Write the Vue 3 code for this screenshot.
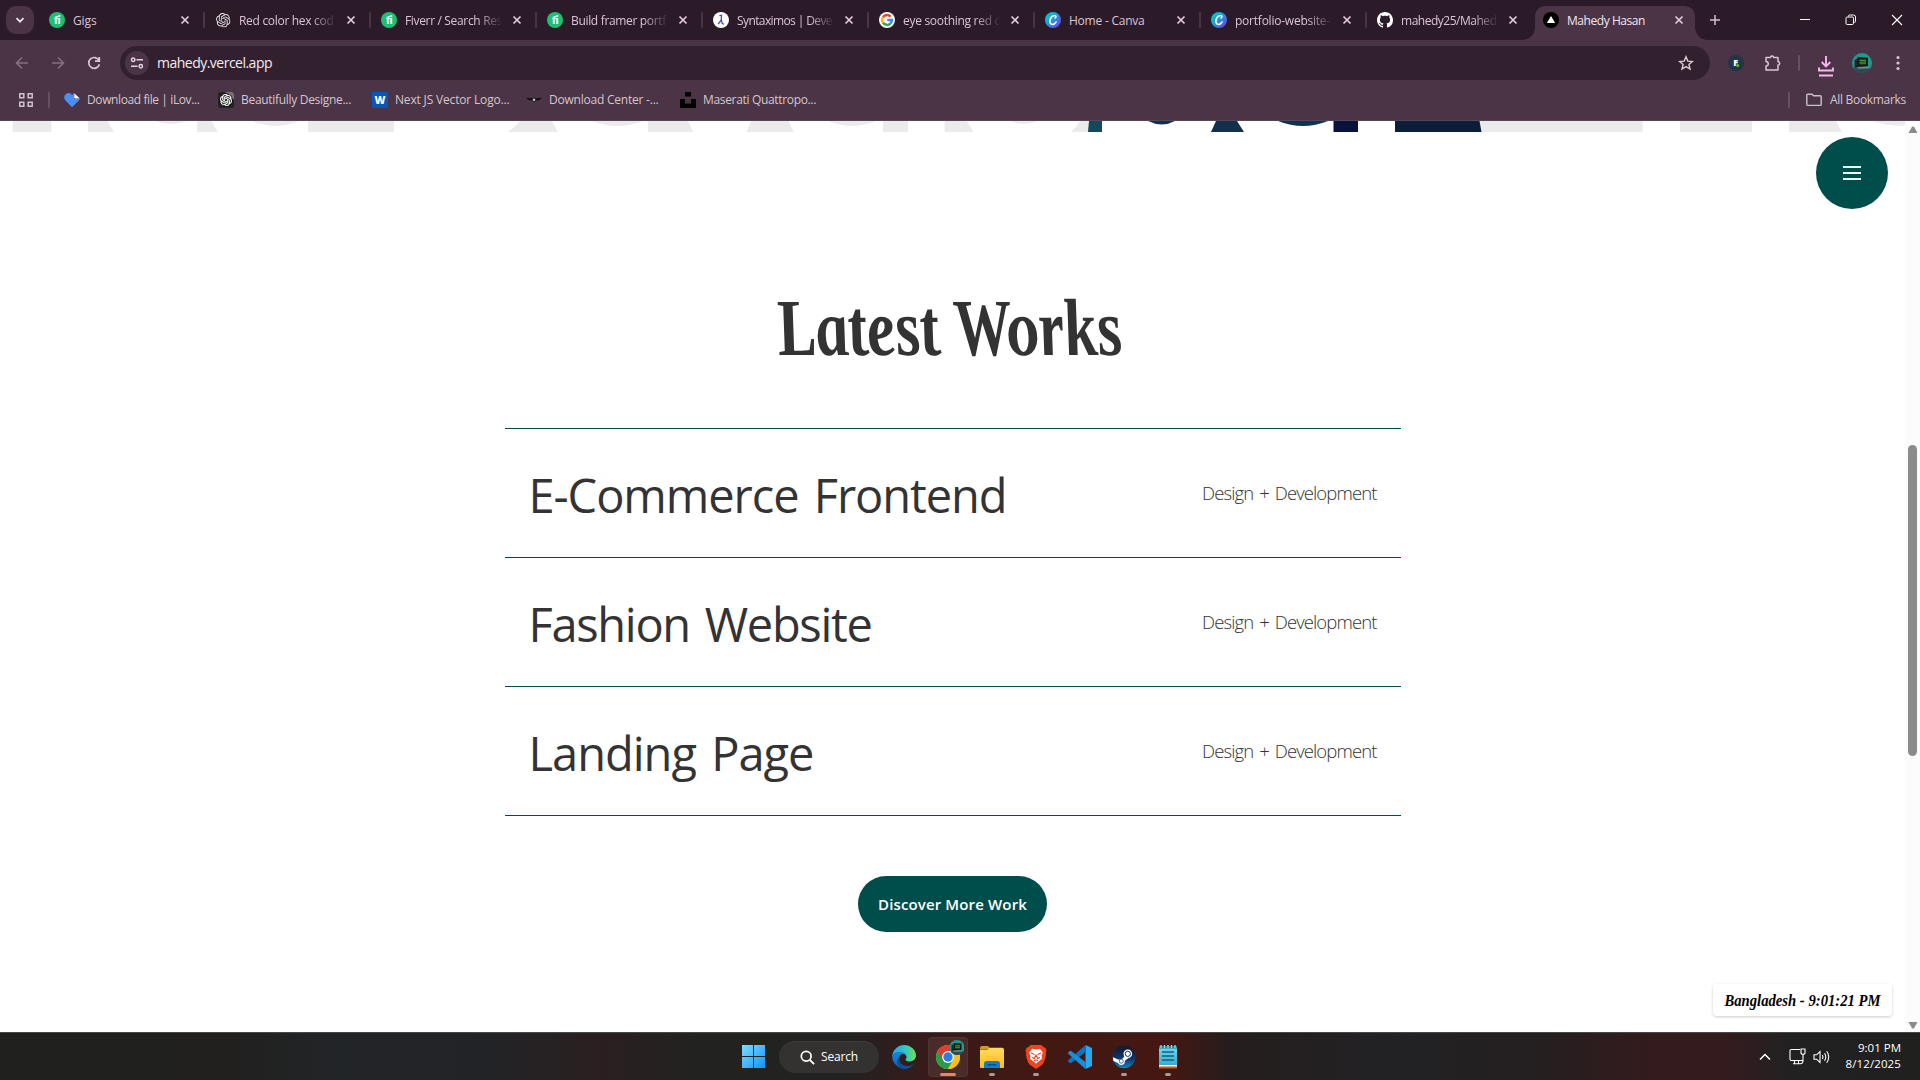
<script setup>
const tabs = [
  { badge: 'fi', title: 'Gigs', w: 23.5 },
  { icon: 'gpt', title: 'Red color hex cod', w: 94.5, fade: true },
  { badge: 'fi', title: 'Fiverr / Search Res', w: 97, fade: true },
  { badge: 'fi', title: 'Build framer portf', w: 95, fade: true },
  { icon: 'syntax', title: 'Syntaximos | Deve', w: 95, fade: true },
  { icon: 'google', title: 'eye soothing red c', w: 97, fade: true },
  { icon: 'canva', title: 'Home - Canva', w: 75.5 },
  { icon: 'canva', title: 'portfolio-website-', w: 95, fade: true },
  { icon: 'github', title: 'mahedy25/Mahed', w: 95.5, fade: true },
  { icon: 'vercel', title: 'Mahedy Hasan', w: 78, active: true },
]
const bookmarks = [
  { icon: 'heart', title: 'Download file | iLov...', w: 112.5 },
  { icon: 'gptbox', title: 'Beautifully Designe...', w: 110 },
  { badge: 'W', title: 'Next JS Vector Logo...', w: 114.5 },
  { icon: 'wings', title: 'Download Center -...', w: 109.5 },
  { icon: 'unsplash', title: 'Maserati Quattropo...', w: 113 },
]
const works = [
  { title: 'E-Commerce Frontend', w: 478 },
  { title: 'Fashion Website', w: 343 },
  { title: 'Landing Page', w: 285 },
]
const apps = [
  { icon: 'edge' },
  { icon: 'chrome', current: true },
  { icon: 'explorer', open: true },
  { icon: 'brave', open: true },
  { icon: 'vscode' },
  { icon: 'steam', open: true },
  { icon: 'notepad', open: true },
]
// Tracks a label so that it fills the given width.
const vFit = {
  mounted(el, { value }) {
    const range = document.createRange()
    range.selectNodeContents(el)
    const width = range.getBoundingClientRect().width
    el.style.letterSpacing = `${(value - width) / el.textContent.length}px`
  },
}
</script>

<template>
  <svg class="sheet" width="0" height="0">
    <defs>
      <linearGradient id="g-canva" x1="0" y1="0" x2="1" y2="1"><stop offset=".2" stop-color="#00c4cc" /><stop offset=".6" stop-color="#3b7fe0" /><stop offset="1" stop-color="#7d2ae8" /></linearGradient>
      <linearGradient id="g-win" x1="0" y1="0" x2="1" y2="1"><stop offset="0" stop-color="#7fdcff" /><stop offset="1" stop-color="#1094f5" /></linearGradient>
      <linearGradient id="g-edge" x1="0" y1="0" x2="1" y2="0"><stop offset="0" stop-color="#2aa5e8" /><stop offset=".55" stop-color="#33c6c4" /><stop offset="1" stop-color="#6ee04c" /></linearGradient>
      <linearGradient id="g-edge2" x1="0" y1="0" x2="0" y2="1"><stop offset="0" stop-color="#1686d8" /><stop offset="1" stop-color="#1164b4" /></linearGradient>
      <linearGradient id="g-steam" x1="0" y1="0" x2="0" y2="1"><stop offset="0" stop-color="#10162f" /><stop offset=".6" stop-color="#0e3a70" /><stop offset="1" stop-color="#1688bd" /></linearGradient>
      <linearGradient id="g-folder" x1="0" y1="0" x2="0" y2="1"><stop offset="0" stop-color="#ffda60" /><stop offset="1" stop-color="#fbbd24" /></linearGradient>
      <linearGradient id="g-note" x1="0" y1="0" x2="0" y2="1"><stop offset="0" stop-color="#74dbee" /><stop offset="1" stop-color="#35aed0" /></linearGradient>
    </defs>
    <symbol id="knot" viewBox="0 0 24 24"><path fill="currentColor" d="M22.28 9.82a5.98 5.98 0 0 0-.52-4.91 6.05 6.05 0 0 0-6.51-2.9A6.07 6.07 0 0 0 4.98 4.18a5.98 5.98 0 0 0-4 2.9 6.05 6.05 0 0 0 .74 7.1 5.98 5.98 0 0 0 .51 4.91 6.05 6.05 0 0 0 6.52 2.9A5.98 5.98 0 0 0 13.26 24a6.06 6.06 0 0 0 5.77-4.21 5.99 5.99 0 0 0 4-2.9 6.06 6.06 0 0 0-.75-7.07zm-9.02 12.61a4.48 4.48 0 0 1-2.88-1.04l.14-.08 4.78-2.76a.8.8 0 0 0 .39-.68v-6.74l2.02 1.17.04.05v5.58a4.5 4.5 0 0 1-4.49 4.5zM3.6 18.3a4.47 4.47 0 0 1-.54-3.01l.15.08 4.78 2.76a.77.77 0 0 0 .78 0l5.84-3.37v2.33l-.03.06-4.83 2.79A4.5 4.5 0 0 1 3.6 18.3zM2.34 7.9a4.49 4.49 0 0 1 2.37-1.98V11.6a.77.77 0 0 0 .38.68l5.82 3.35-2.02 1.17h-.07l-4.83-2.79A4.5 4.5 0 0 1 2.34 7.87zm16.6 3.85-5.84-3.38L15.12 7.2h.07l4.83 2.79a4.49 4.49 0 0 1-.68 8.1v-5.67a.79.79 0 0 0-.41-.67zm2.01-3.02-.14-.09-4.78-2.78a.78.78 0 0 0-.78 0L9.41 9.23V6.9l.03-.06 4.83-2.79a4.5 4.5 0 0 1 6.68 4.66zM8.31 12.86l-2.02-1.16-.04-.06V6.07a4.5 4.5 0 0 1 7.38-3.45l-.14.08-4.78 2.76a.8.8 0 0 0-.39.68zm1.09-2.36L12 9l2.61 1.5v3L12 15l-2.6-1.5z" /></symbol>
    <symbol id="gpt" viewBox="0 0 16 16"><use href="#knot" x="1" y="1" width="14.5" height="14.5" color="#e4dfe4" /></symbol>
    <symbol id="gptbox" viewBox="0 0 16 16"><rect width="16" height="16" rx="2.500" fill="#242424" /><path d="M2.500 0h11A2.500 2.500 0 0 1 16 2.500V8L7 0z" fill="#77736f" /><circle cx="8" cy="8" r="6.800" fill="#111" /><use href="#knot" x="2" y="2" width="12" height="12" color="#fff" stroke="#fff" stroke-width=".8" /></symbol>
    <symbol id="syntax" viewBox="0 0 16 16"><circle cx="8" cy="8" r="8" fill="#fff" /><path d="M6.400 3.600 8.500 3.200l-.3 4.900-3 3.900M8.300 8l.8 3.200 1.700 1.200" fill="none" stroke="#3f4fb3" stroke-width="1.300" /></symbol>
    <symbol id="google" viewBox="0 0 16 16"><circle cx="8" cy="8" r="8" fill="#fff" /><g fill="none" stroke-width="2.500"><path d="M4 5.200A4.900 4.900 0 0 1 11.600 4.600" stroke="#ea4335" /><path d="M4 5.200a4.900 4.900 0 0 0 0 5.600" stroke="#fbbc05" /><path d="M4 10.800a4.900 4.900 0 0 0 7.300.8" stroke="#34a853" /><path d="M11.300 11.600A4.900 4.900 0 0 0 12.900 8H8.200" stroke="#4285f4" /></g></symbol>
    <symbol id="canva" viewBox="0 0 16 16"><circle cx="8" cy="8" r="8" fill="url(#g-canva)" /><path d="M10.100 6.100c1.200-.7 1.300-2.700-.5-2.700C7 3.400 4.900 6.400 4.900 9.200c0 4 4 4.200 6.200.8" fill="none" stroke="#fff" stroke-width="1.500" stroke-linecap="round" /></symbol>
    <symbol id="github" viewBox="0 0 16 16"><path fill="#fff" d="M8 0C3.580 0 0 3.580 0 8c0 3.540 2.290 6.530 5.470 7.590.4.070.55-.17.55-.38 0-.19-.01-.82-.01-1.490-2.010.37-2.530-.49-2.690-.94-.09-.23-.48-.94-.82-1.130-.28-.15-.68-.52-.01-.53.63-.01 1.080.58 1.230.82.72 1.210 1.870.87 2.330.66.07-.52.28-.87.51-1.070-1.780-.2-3.640-.89-3.640-3.950 0-.87.31-1.590.82-2.150-.08-.2-.36-1.020.08-2.120 0 0 .67-.21 2.200.82.64-.18 1.320-.27 2-.27s1.360.09 2 .27c1.530-1.040 2.200-.82 2.200-.82.44 1.100.16 1.920.08 2.120.51.56.82 1.270.82 2.150 0 3.070-1.870 3.750-3.650 3.950.29.25.54.73.54 1.480 0 1.070-.01 1.930-.01 2.200 0 .21.15.46.55.38A8.010 8.010 0 0 0 16 8c0-4.420-3.580-8-8-8z" /></symbol>
    <symbol id="vercel" viewBox="0 0 16 16"><circle cx="8" cy="8" r="8" fill="#000" /><path d="M8 4l4.200 7H3.800z" fill="#fff" /></symbol>
    <symbol id="heart" viewBox="0 0 16 16"><path d="M8 15.200 1.300 8.300C-.6 6.200.2 2.900 2.400 1.700 4.600.5 7 1 8 3.200l2-2.400V7h5.800c-.2.600-.6 1.100-1 1.500z" fill="#4a8ff8" /><path d="M10.300 1.200 15.800 6.600h-5.500z" fill="#fff" /></symbol>
    <symbol id="wings" viewBox="0 0 16 16"><path d="M0 5.800l6 .5 2-.9 2 .9 6-.5-2.500 2.300-4 .7L8 10l-1.500-1.200-4-.7z" fill="#141014" /><circle cx="8" cy="7.700" r="1.300" fill="#ccc" /></symbol>
    <symbol id="unsplash" viewBox="0 0 16 16"><path d="M5 0h6v4.500H5zM0 7h5v4.500h6V7h5v9H0z" fill="#000" /></symbol>
    <symbol id="close" viewBox="0 0 16 16"><path d="M4.500 4.500l7 7M11.500 4.500l-7 7" stroke="currentColor" stroke-width="1.700" /></symbol>
    <symbol id="avatar" viewBox="0 0 20 20"><circle cx="10" cy="10" r="10" fill="#1f9a8f" /><path d="M1.500 15.200h17A10 10 0 0 1 1.500 15.200z" fill="#2c4a52" /><path d="M5.500 4l10.500.8v9L4.500 14.500z" fill="#16191c" /><path d="M2.500 7l3-1.500v9L2.500 15z" fill="#22262a" /><rect x="7.500" y="6.300" width="6.500" height="5.200" fill="#1c5c14" /><path d="M7.500 7.500H14M7.500 10H14" stroke="#5ab829" stroke-width=".7" /><path d="M5 14l11-.8.8 2-10.500.6z" fill="#77858a" /></symbol>

    <symbol id="edge" viewBox="0 0 24 24"><path d="M.3 10.500C1.200 4.200 6.200 0 12 0c6.900 0 12 5 12 10.600 0 3.700-2.800 5.900-5.900 5.900-2.500 0-4.600-.7-4.600-1.800 0-.7 1-1 1-2.700 0-2.200-2.400-4.300-6-4.300C4.400 7.700 1 9 .3 12z" fill="url(#g-edge)" /><path d="M.2 12C.2 8.800 3.700 6.800 7.400 6.800c4 0 7 2.300 7.100 5-.4-1.700-1.900-2.700-3.500-2.700-2.300 0-4 2.100-4 4.900C7 19.500 11.500 24 16 22.800A12 12 0 0 1 .2 12z" fill="url(#g-edge2)" /><path d="M8 11.500C6 16.500 9.800 21 15.500 21c3 0 5.300-1.100 6.700-2.300C19.500 22.300 16.300 24 12.300 24 7.600 24 4.800 20 5.100 16.200 5.300 14 6.400 12.300 8 11.500z" fill="#0e4f9c" /></symbol>
    <symbol id="chrome" viewBox="0 0 32 32"><g transform="translate(4 6)"><circle cx="12" cy="12" r="12" fill="#fbc116" /><path d="M1.600 6A12 12 0 0 0 12 24l5.200-9L12 12z" fill="#2a9d48" /><path d="M1.600 6a12 12 0 0 1 20.800 0H12v6l-5.200 3z" fill="#e33b2e" /><path d="M12 24l5.200-9L22.400 6A12 12 0 0 1 12 24z" fill="#fbc116" /><circle cx="12" cy="12" r="5.900" fill="#fff" /><circle cx="12" cy="12" r="4.700" fill="#2b7de9" /></g><use href="#avatar" x="17.500" y="1" width="15" height="15" /></symbol>
    <symbol id="explorer" viewBox="0 0 24 24"><path d="M0 3a2 2 0 0 1 2-2h6l3 3H0z" fill="#d99a10" /><path d="M0 4.500h7.500L10 2.800h12a2 2 0 0 1 2 2V22a1 1 0 0 1-1 1H1a1 1 0 0 1-1-1z" fill="url(#g-folder)" /><path d="M4 23v-4.500A2.500 2.500 0 0 1 6.500 16h11a2.500 2.500 0 0 1 2.500 2.500V23z" fill="#1779d0" /><path d="M7.500 19.800h9" stroke="#0a4f94" stroke-width="1.500" /></symbol>
    <symbol id="brave" viewBox="0 0 24 24"><path d="M6.500 0h11L20 2.600l1.200-.1 1.300 2.700-.6 2.300c.5 4-1.800 9.500-3.400 12L12 24l-6.500-4.500C3.900 17 1.600 11.500 2.100 7.500l-.6-2.300 1.300-2.700 1.200.1z" fill="#f4421f" /><path d="M12 4.500l3.800-.8 3 3.800-1.300 3.600.6 2.500-3.600 2.800L12 18.800l-2.500-2.400-3.600-2.800.6-2.500L5.200 7.500l3-3.800z" fill="#fff" /><path d="M7 8l3.500 1.500M17 8l-3.500 1.500M8 12.500l2.300 1L12 10l1.700 3.500 2.300-1M10 15.800l2-1 2 1" fill="none" stroke="#f4421f" stroke-width="1.200" /></symbol>
    <symbol id="vscode" viewBox="0 0 24 24"><path d="M17.500 0 24 3v18l-6.500 3z" fill="#29a8f2" /><path d="M17.500 0v7L3.200 18 1.700 18.100.2 16.600v-1.300z" fill="#0d74bd" /><path d="M.2 8.700v-1.300L1.700 6l1.500.1L17.500 17v7z" fill="#168fd8" /></symbol>
    <symbol id="steam" viewBox="0 0 24 24"><circle cx="12" cy="12" r="11.300" fill="url(#g-steam)" /><path d="M.8 12.200l6 2.500 4-1.300 3-4.500 4 3-5 3.800a3.600 3.600 0 0 1-6.800 2.200l-4.600-1.800z" fill="#fff" /><circle cx="15.800" cy="8.800" r="4.300" fill="#fff" /><circle cx="15.800" cy="8.800" r="2.600" fill="#fff" stroke="#17305c" stroke-width="1" /><circle cx="9.300" cy="16.200" r="2" fill="#fff" stroke="#14508a" stroke-width=".8" /></symbol>
    <symbol id="notepad" viewBox="0 0 24 24"><path d="M3 20h18v3.500H3z" fill="#b9601e" /><path d="M3 19h18v2.500H3z" fill="#f3f3f3" /><path d="M3 1.500h18V20H3z" fill="url(#g-note)" /><path d="M3 1.500h18v2H3z" fill="#1f7f9d" /><path d="M5 0v3M8.500 0v3M12 0v3M15.500 0v3M19 0v3" stroke="#8ee4f2" stroke-width="1.300" /><path d="M6.500 7h11M6.500 11h11M6.500 15h11" stroke="#135f80" stroke-width="1.600" stroke-linecap="round" /></symbol>
  </svg>

  <div class="screen">
    <header class="browser">
      <div class="strip">
        <button class="tab-search"><svg width="12" height="12" viewBox="0 0 12 12"><path d="M2.500 4.200 6 7.700l3.500-3.500" fill="none" stroke="#eadfe8" stroke-width="1.900" /></svg></button>
        <div class="tabs">
          <div v-for="t in tabs" :key="t.title" class="tab" :class="{ active: t.active }">
            <span v-if="t.badge" class="badge round">{{ t.badge }}</span>
            <svg v-else class="fav"><use :href="'#' + t.icon" /></svg>
            <span class="tab-title" :class="{ fade: t.fade }"><span v-fit="t.w">{{ t.title }}</span></span>
            <svg class="close"><use href="#close" /></svg>
          </div>
        </div>
        <svg class="plus" width="12" height="12" viewBox="0 0 12 12"><path d="M6 1v10M1 6h10" stroke="#d5bfd0" stroke-width="1.500" /></svg>
        <div class="controls">
          <svg width="12" height="12" viewBox="0 0 12 12"><path d="M1 5.500h10" stroke="#fff" stroke-width="1" /></svg>
          <svg width="12" height="12" viewBox="0 0 12 12"><path d="M3.500 2.500V2.200A1.200 1.200 0 0 1 4.700 1H8.500A2 2 0 0 1 10.500 3V7.200A1.300 1.300 0 0 1 9.300 8.500" fill="none" stroke="#fff" /><rect x="1" y="3" width="7.500" height="7.500" rx="1.200" fill="none" stroke="#fff" /></svg>
          <svg width="12" height="12" viewBox="0 0 12 12"><path d="M1 1l10 10M11 1 1 11" stroke="#fff" stroke-width="1.100" /></svg>
        </div>
      </div>

      <div class="toolbar">
        <div class="nav">
          <svg class="dim" width="16" height="16" viewBox="0 0 16 16"><path d="M8 2.500 2.500 8 8 13.500M2.500 8H14" fill="none" stroke="currentColor" stroke-width="1.600" /></svg>
          <svg class="dim" width="16" height="16" viewBox="0 0 16 16"><path d="M8 2.500 13.500 8 8 13.500M13.500 8H2" fill="none" stroke="currentColor" stroke-width="1.600" /></svg>
          <svg width="16" height="16" viewBox="0 0 16 16"><path d="M13 5.500A5.400 5.400 0 1 0 13.400 9.200M13.300 2v4.200H9" fill="none" stroke="currentColor" stroke-width="1.700" /></svg>
        </div>
        <div class="omnibox">
          <span class="site"><svg width="14" height="14" viewBox="0 0 14 14" fill="none" stroke="currentColor" stroke-width="1.500"><circle cx="3.200" cy="3.700" r="1.700" /><path d="M6.500 3.700H13M1 10.300h6.500" /><circle cx="10.800" cy="10.300" r="1.700" /></svg></span>
          <span v-fit="115" class="url">mahedy.vercel.app</span>
          <svg class="star" width="16" height="16" viewBox="0 0 16 16"><path d="M8 1.800l1.800 4.300 4.600.4-3.500 3 1.100 4.500L8 11.600 4 14l1.100-4.500-3.500-3 4.600-.4z" fill="none" stroke="currentColor" stroke-width="1.400" /></svg>
        </div>
        <div class="tools">
          <svg class="ext" width="16" height="16" viewBox="0 0 16 16"><circle cx="8" cy="8" r="8" fill="#203548" /><text x="7.600" y="11.300" text-anchor="middle" font-family="Open Sans, sans-serif" font-weight="800" font-size="9" fill="#fff">F</text><circle cx="9.700" cy="10.500" r="1.500" fill="#5fc21c" /></svg>
          <svg class="puzzle" width="18" height="18" viewBox="0 0 18 18"><path d="M2 3.500h4.500a1.600 1.600 0 0 1 3.200 0H14V7.700a1.700 1.700 0 0 1 0 3.400V16H2V12a2.200 2.200 0 0 0 0-4.500z" fill="none" stroke="currentColor" stroke-width="1.500" stroke-linejoin="round" /></svg>
          <i class="bar" />
          <svg class="dl" width="18" height="22" viewBox="0 0 18 22"><path d="M9 1v10M4.700 7 9 11.300 13.300 7M2 12.500v3h14v-3M2 20.500h14" fill="none" stroke="#fbb4f4" stroke-width="1.900" /></svg>
          <svg class="me" width="20" height="20"><use href="#avatar" /></svg>
          <svg class="dots" width="4" height="16" viewBox="0 0 4 16" fill="currentColor"><circle cx="2" cy="2.500" r="1.600" /><circle cx="2" cy="8" r="1.600" /><circle cx="2" cy="13.500" r="1.600" /></svg>
        </div>
      </div>

      <div class="bookmarks">
        <svg class="grid" width="14" height="14" viewBox="0 0 14 14" fill="none" stroke="#cfc3cc" stroke-width="1.500"><path d="M.8.8h4v4h-4zM9.200.8h4v4h-4zM.8 9.200h4v4h-4zM9.200 9.200h4v4h-4z" /></svg>
        <i class="bar" />
        <div v-for="b in bookmarks" :key="b.title" class="bm">
          <span v-if="b.badge" class="badge square">{{ b.badge }}</span>
          <svg v-else class="fav"><use :href="'#' + b.icon" /></svg>
          <span v-fit="b.w" class="bm-text">{{ b.title }}</span>
        </div>
        <div class="all">
          <i class="bar" />
          <svg width="16" height="14" viewBox="0 0 16 14"><path d="M.8 2.200A1 1 0 0 1 1.800 1.200H6l1.600 1.600h6.600a1 1 0 0 1 1 1v7.600a1 1 0 0 1-1 1H1.800a1 1 0 0 1-1-1z" fill="none" stroke="#cdbfca" stroke-width="1.400" /></svg>
          <span v-fit="76" class="bm-text">All Bookmarks</span>
        </div>
      </div>
    </header>

    <main class="page">
      <div class="view">
        <svg class="hero-edge" width="1905" height="11" viewBox="0 0 1905 11">
          <g fill="#ebebeb">
            <path d="M12.700 0H51.300V11H12.700zM88 0h20q2 6 6.700 11H88zM155 0h32q-16 6-32 0zM197 0h15q2 6 6 11H197zM252 0h47q-23 10-47 0zM308 0h86V11H308zM520 0h32l6 11H508q7-5 12-11zM592 0h51q-25 10-51 0zM648 0h40l5 11H648zM751 0h38l4.600 11h-47zM828 0h48q-24 10-48 0zM883 0h25V11H883zM944.600 0H967l6.600 11h-29zM1010 0h28q-14 6-28 0zM1080 0h9v11h-18q6-5 9-11zM1480 0h162.700v11H1480zM1680 0h72v11h-72zM1789 0h47l6 11h-53zM1872 0h33v4.500q-17 1-33-4.500z" />
          </g>
          <g fill="#0b1d38">
            <path d="M1089 0h13v11h-14z" fill="#14485a" />
            <path d="M1148 0h27q-13 7-27 0zM1216 0h21l7 11h-33z" fill="#12304e" />
            <path d="M1278 0h50q-25 10-50 0z" fill="#123350" />
            <path d="M1333.500 0h24.500v11h-24.500z" fill="#08123a" />
            <path d="M1395 0h84.500l2 11H1395z" />
          </g>
        </svg>
        <button class="menu"><svg width="18" height="14" viewBox="0 0 18 14"><path d="M0 1h18M0 7h18M0 13h18" stroke="#e9fffb" stroke-width="1.900" /></svg></button>
        <h1 class="heading"><svg width="370" height="110" viewBox="0 0 370 110"><g transform="translate(12 73) skewX(10)"><text textLength="346" lengthAdjust="spacingAndGlyphs">Latest Works</text></g></svg></h1>
        <ul class="works">
          <li v-for="w in works" :key="w.title">
            <span v-fit="w.w" class="name">{{ w.title }}</span>
            <span v-fit="174.500" class="kind">Design + Development</span>
          </li>
        </ul>
        <button class="more"><span v-fit="149">Discover More Work</span></button>
        <div class="clock"><svg width="160" height="24" viewBox="0 0 160 24"><text x="1.500" y="16.500" textLength="156" lengthAdjust="spacingAndGlyphs">Bangladesh - 9:01:21 PM</text></svg></div>
      </div>
      <div class="scroll">
        <svg width="10" height="8" viewBox="0 0 10 8"><path d="M4 .8Q5 0 6 .8L9.500 7H.5z" fill="#8b8b8b" /></svg>
        <i class="thumb" />
        <svg class="down" width="10" height="8" viewBox="0 0 10 8"><path d="M.5 1h9L6 7.200Q5 8 4 7.200z" fill="#8b8b8b" /></svg>
      </div>
    </main>

    <footer class="taskbar">
      <div class="dock">
        <svg class="start" width="23" height="23" viewBox="0 0 23 23"><path d="M0 0h11v11H0zM12 0h11v11H12zM0 12h11v11H0zM12 12h11v11H12z" fill="url(#g-win)" /></svg>
        <div class="search"><svg width="15" height="15" viewBox="0 0 15 15"><circle cx="6.200" cy="6.200" r="4.900" fill="none" stroke="#fff" stroke-width="1.700" /><path d="M9.800 9.800l4.300 4.300" stroke="#fff" stroke-width="1.900" /></svg><span v-fit="37" class="bm-text">Search</span></div>
        <div v-for="a in apps" :key="a.icon" class="app" :class="{ current: a.current, open: a.open }">
          <svg class="app-icon"><use :href="'#' + a.icon" /></svg>
        </div>
      </div>
      <div class="tray">
        <svg width="12" height="8" viewBox="0 0 12 8"><path d="M1 6.500l5-5 5 5" fill="none" stroke="#fff" stroke-width="1.500" /></svg>
        <svg class="pc" width="17" height="17" viewBox="0 0 17 17" fill="none" stroke="#fff" stroke-width="1.100"><path d="M11 1.500H2.200A1.200 1.200 0 0 0 1 2.700v8.600a1.200 1.200 0 0 0 1.200 1.200h11.500M5.500 12.500v3M9.500 12.500v3M4 15.700h7.500M12 1h4v4.200l-1 1h-2l-1-1zM14 6.200v6.800q0 2.500-2.500 2.700" /></svg>
        <svg class="vol" width="17" height="14" viewBox="0 0 17 14" fill="none" stroke="#fff" stroke-width="1.100"><path d="M1 4.800h2.600L7 1.600v10.800L3.600 9.200H1zM9.300 5q1.300 2 0 4M11.500 3.200q2.600 3.800 0 7.600M13.700 1.300q4 5.700 0 11.400" /></svg>
        <div class="time"><span v-fit="43">9:01 PM</span><span v-fit="55.500">8/12/2025</span></div>
      </div>
    </footer>
  </div>
</template>

<style>
body { margin: 0; overflow: hidden; background: #fff; }
</style>

<style scoped>
* { box-sizing: border-box; }
.sheet { position: absolute; }
.screen { width: 1920px; height: 1080px; display: flex; flex-direction: column; overflow: hidden; font-family: "Open Sans", "Noto Sans", sans-serif; }
svg { display: block; flex: none; }
button { border: 0; padding: 0; font: inherit; }
.browser { height: 121px; background: #4a3445; color: #dccbd7; flex: none; font-size: 12px; border-bottom: 1px solid #594654; }
.fav { width: 16px; height: 16px; }
.badge { width: 16px; height: 16px; flex: none; color: #fff; text-align: center; line-height: 16px; }
.round { border-radius: 50%; background: #1dbf73; font: 900 12px/15px Lato, sans-serif; letter-spacing: -.4px; }
.square { background: #0a57b8; font-weight: 800; font-size: 10.500px; }

.strip { height: 40px; background: #2b1b29; display: flex; }
.tab-search { width: 28px; height: 28px; margin: 6px 4px 0 6px; border-radius: 10px; background: #4a3445; display: flex; align-items: center; justify-content: center; }
.tabs { display: flex; }
.tab { width: 166px; height: 40px; padding: 0 0 0 11px; display: flex; align-items: center; color: #dcc3d5; position: relative; }
.tab:not(.active)::after { content: ""; position: absolute; right: -1px; top: 12px; width: 2px; height: 16px; background: #4a3445; border-radius: 1px; }
.tab:nth-child(9)::after { display: none; }
.tab-title { width: 96px; margin: 1px 0 0 8px; overflow: hidden; white-space: nowrap; line-height: 20px; }
.tab-title.fade { -webkit-mask-image: linear-gradient(90deg, #000 72px, transparent 98px); mask-image: linear-gradient(90deg, #000 72px, transparent 98px); }
.close { width: 16px; height: 16px; margin-left: 8px; color: #e2cbdc; }
.tab.active { width: 160px; margin: 6px 0 0 3px; height: 34px; padding: 0 0 6px 8px; background: #4a3445; border-radius: 10px 10px 0 0; color: #f3e6ef; }
.tab.active .tab-title { margin-top: 2px; }
.tab.active::before, .tab.active::after { content: ""; position: absolute; bottom: 0; width: 12px; height: 12px; }
.tab.active::before { left: -12px; background: radial-gradient(circle at 0 0, transparent 11.500px, #4a3445 12px); }
.tab.active::after { right: -12px; background: radial-gradient(circle at 100% 0, transparent 11.500px, #4a3445 12px); }
.plus { margin: 14px 0 0 14px; }
.controls { margin: 14px 17px 0 auto; display: flex; gap: 34px; }

.toolbar { height: 46px; padding-top: 6px; display: flex; }
.nav { display: flex; gap: 20px; width: 120px; padding: 9px 0 0 14px; color: #dcc6d7; }
.nav .dim { color: #857080; }
.omnibox { width: 1590px; height: 34px; border-radius: 17px; background: #33202f; display: flex; align-items: center; padding: 0 16px 0 5px; }
.site { width: 24px; height: 24px; border-radius: 12px; background: #4a3445; color: #e3d2df; display: flex; align-items: center; justify-content: center; }
.url { margin-left: 8px; font-size: 14px; line-height: 20px; color: #f5eaf2; margin-bottom: 1px; }
.star { margin-left: auto; color: #dccbd7; }
.tools { display: flex; flex: 1; color: #dcc3d5; padding-top: 9px; }
.ext { margin-left: 18px; }
.puzzle { margin: -1px 0 0 20px; }
.bar { width: 2px; height: 16px; background: #69515f; border-radius: 1px; flex: none; }
.tools .bar { margin-left: 16px; }
.dl { margin-left: 17px; }
.me { margin: -2px 0 0 17px; }
.dots { margin-left: 24px; }

.bookmarks { height: 34px; padding: 0 14px 0 19px; display: flex; align-items: center; margin-top: -3px; color: #d5c6cf; }
.grid { margin-right: 15px; }
.bookmarks > .bar { margin-right: 14px; }
.bm { width: 154px; display: flex; align-items: center; gap: 7px; white-space: nowrap; }
.bm-text { margin-bottom: 2px; }
.all { margin-left: auto; display: flex; align-items: center; white-space: nowrap; }
.all svg { margin: 0 8px 0 16px; }

.page { flex: none; height: 911px; display: flex; }
.view { width: 1905px; height: 911px; position: relative; display: flex; flex-direction: column; align-items: center; background: #fff; }
.menu { position: absolute; left: 1816px; top: 16px; width: 72px; height: 72px; border-radius: 50%; background: #004e4b; display: flex; align-items: center; justify-content: center; }
.heading { margin: 150px 0 0; height: 110px; font-weight: 700; }
.heading svg { overflow: visible; }
.heading text { font: italic 700 81px "Liberation Serif", serif; fill: #333; }
.works { list-style: none; margin: 36px 0 0; padding: 0; width: 896px; border-top: 1px solid #004e4b; color: #333; }
.works li { height: 129px; border-bottom: 1px solid #004e4b; padding: 0 24px; display: flex; justify-content: space-between; align-items: flex-start; white-space: nowrap; }
.name { font-size: 47px; line-height: 60px; margin-top: 36px; word-spacing: 4px; }
.kind { font-size: 18.500px; font-weight: 300; line-height: 24px; margin-top: 52px; word-spacing: 2px; }
.more { margin-top: 60px; width: 189px; height: 56px; border-radius: 28px; background: #004e4b; color: #fff; font-size: 15px; font-weight: 600; white-space: nowrap; }
.clock { position: absolute; left: 1713px; top: 863px; width: 179px; height: 32px; background: #fff; border-radius: 4px; box-shadow: 0 1px 3px rgba(0, 0, 0, .2); padding: 5px 10px; }
.clock text { font: italic 700 16.500px "Liberation Serif", serif; fill: #000; }
.scroll { width: 15px; background: #fcfcfc; display: flex; flex-direction: column; align-items: center; padding: 5px 0 3px; }
.thumb { width: 9px; height: 311px; border-radius: 5px; background: #8b8b8b; margin-top: 311px; }
.down { margin-top: auto; }

.taskbar { height: 48px; border-top: 1px solid #48484a; display: flex; justify-content: space-between; color: #fff; font-size: 12px; background: linear-gradient(90deg, #20201e 0%, #21201f 12%, #222528 18%, #222326 26%, #2b1f20 31%, #222220 36%, #222 44%, #3a1a18 49%, #421813 54%, #441712 61%, #251d1d 64%, #222224 72%, #241f20 80%, #341b1d 86%, #341b1e 90%, #222122 93%, #20201f 100%); }
.dock { display: flex; align-items: center; padding-left: 742px; }
.search { width: 100px; height: 32px; margin: 0 3px 0 14px; border-radius: 16px; background: #343231; border-top: 1px solid #403e3d; display: flex; align-items: center; justify-content: center; gap: 6px; }
.app { width: 40px; height: 40px; margin-left: 4px; display: flex; align-items: center; justify-content: center; border-radius: 4px; position: relative; }
.app:nth-child(3) { margin-left: 2px; }
.app-icon { width: 24px; height: 24px; }
.current { background: rgba(255, 255, 255, .08); box-shadow: inset 0 0 0 1px rgba(255, 255, 255, .05); }
.current .app-icon { width: 32px; height: 32px; margin-top: -4px; }
.open::after, .current::after { content: ""; position: absolute; left: 17px; bottom: 1px; width: 6px; height: 3px; border-radius: 2px; background: #a89a98; }
.current::after { left: 12px; width: 16px; background: #f0806a; }
.tray { display: flex; align-items: center; padding-right: 19px; }
.pc { margin-left: 18px; }
.vol { margin-left: 7px; }
.time { width: 62px; margin: 0 0 1px 9px; display: flex; flex-direction: column; align-items: flex-end; line-height: 16px; font-size: 11.500px; white-space: nowrap; }
</style>
